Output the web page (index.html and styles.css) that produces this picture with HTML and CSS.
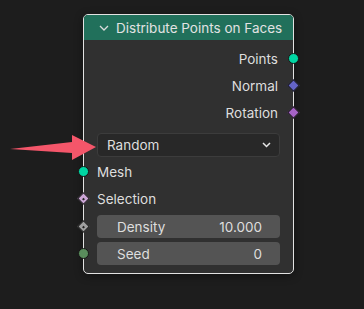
FILE: index.html
```html
<!DOCTYPE html>
<html lang="en">
<head>
  <meta charset="UTF-8">
  <title>Distribute Points on Faces</title>
  <link rel="stylesheet" href="styles.css">
</head>
<body>

  <div class="canvas">
    <div class="node">
      <div class="node-header">
        <svg class="collapse" width="10" height="6" viewBox="0 0 10 6">
          <path d="M1 1 L5 5 L9 1" fill="none" stroke="#dcdcdc" stroke-width="1.3"/>
        </svg>
        <span>Distribute Points on Faces</span>
      </div>

      <div class="node-body">
        <!-- outputs -->
        <div class="row output">Points<i class="socket circle geo"></i></div>
        <div class="row output">Normal<i class="socket diamond vec"></i></div>
        <div class="row output">Rotation<i class="socket diamond rot"></i></div>

        <div class="dropdown">
          <span>Random</span>
          <svg width="9" height="6" viewBox="0 0 9 6">
            <path d="M1 1 L4.5 4.5 L8 1" fill="none" stroke="#e6e6e6" stroke-width="1.5"/>
          </svg>
        </div>

        <!-- inputs -->
        <div class="row input"><i class="socket circle geo"></i>Mesh</div>
        <div class="row input"><i class="socket diamond bool dot"></i>Selection</div>

        <div class="field-row">
          <i class="socket diamond float dot"></i>
          <div class="field"><span>Density</span><span>10.000</span></div>
        </div>
        <div class="field-row">
          <i class="socket circle int"></i>
          <div class="field"><span>Seed</span><span>0</span></div>
        </div>
      </div>
    </div>

    <svg class="arrow" width="90" height="30" viewBox="0 0 90 30">
      <polygon points="0,14 62,7 62,0 86,12 62,25 62,18" fill="#f4566a"/>
    </svg>
  </div>

</body>
</html>
```

FILE: styles.css
```css
body {
  margin: 0;
  background-color: #1d1d1d;
  font-family: Inter, "DejaVu Sans", sans-serif;
  font-size: 13.5px;
  color: #dedede;
}

.canvas {
  position: relative;
  width: 364px;
  height: 309px;
  padding: 14px 0 0 83px;
  box-sizing: border-box;
}

.node {
  width: 211px;
  border: 1px solid #e2e2e2;
  border-radius: 5px;
  background-color: #303030;
  box-sizing: border-box;
  box-shadow: 0 2px 8px rgba(0, 0, 0, 0.4);
}

.node-header {
  display: flex;
  align-items: center;
  gap: 7px;
  height: 25px;
  padding-left: 15px;
  background-color: #21705b;
  border-radius: 4px 4px 0 0;
  color: #e2e2e2;
  font-size: 13.5px;
}

.node-body {
  padding: 5px 0 8px;
}

.row {
  position: relative;
  display: flex;
  align-items: center;
  height: 27px;
}

.row.output {
  justify-content: flex-end;
  padding-right: 15px;
}

.row.input {
  padding-left: 13px;
}

.socket {
  position: absolute;
  top: 50%;
  box-sizing: border-box;
}

.output .socket {
  right: -6px;
}

.input .socket {
  left: -6px;
}

.socket.circle {
  width: 11px;
  height: 11px;
  margin-top: -5.5px;
  border-radius: 50%;
  border: 1px solid #161616;
}

.socket.diamond {
  width: 9px;
  height: 9px;
  margin-top: -4.5px;
  transform: rotate(45deg);
  border: 1px solid #161616;
}

.output .socket.diamond {
  right: -5px;
}

.input .socket.diamond {
  left: -5px;
}

.socket.dot::after {
  content: "";
  position: absolute;
  left: 2.5px;
  top: 2.5px;
  width: 2px;
  height: 2px;
  background-color: #222;
}

.geo { background-color: #00d6a3; }
.vec { background-color: #6363c7; }
.rot { background-color: #a663c7; }
.bool { background-color: #cca6d6; }
.float { background-color: #a1a1a1; }
.int { background-color: #598c5c; }

.dropdown {
  display: flex;
  align-items: center;
  justify-content: space-between;
  height: 24px;
  margin: 7px 13px 1px 13px;
  padding: 0 8px 0 9px;
  background-color: #282828;
  border: 1px solid #3c3c3c;
  border-radius: 4px;
  box-sizing: border-box;
}

.row + .field-row {
  margin-top: 3px;
}

.field-row {
  position: relative;
  margin: 0 13px 4px 13px;
}

.field-row:last-child {
  margin-bottom: 0;
}

.field-row .socket {
  left: -19px;
}

.field-row .socket.diamond {
  left: -18px;
}

.field {
  display: flex;
  justify-content: space-between;
  align-items: center;
  height: 23px;
  padding: 0 18px 0 20px;
  background-color: #545454;
  border-radius: 4px;
}

.arrow {
  position: absolute;
  left: 10px;
  top: 135px;
}
```
